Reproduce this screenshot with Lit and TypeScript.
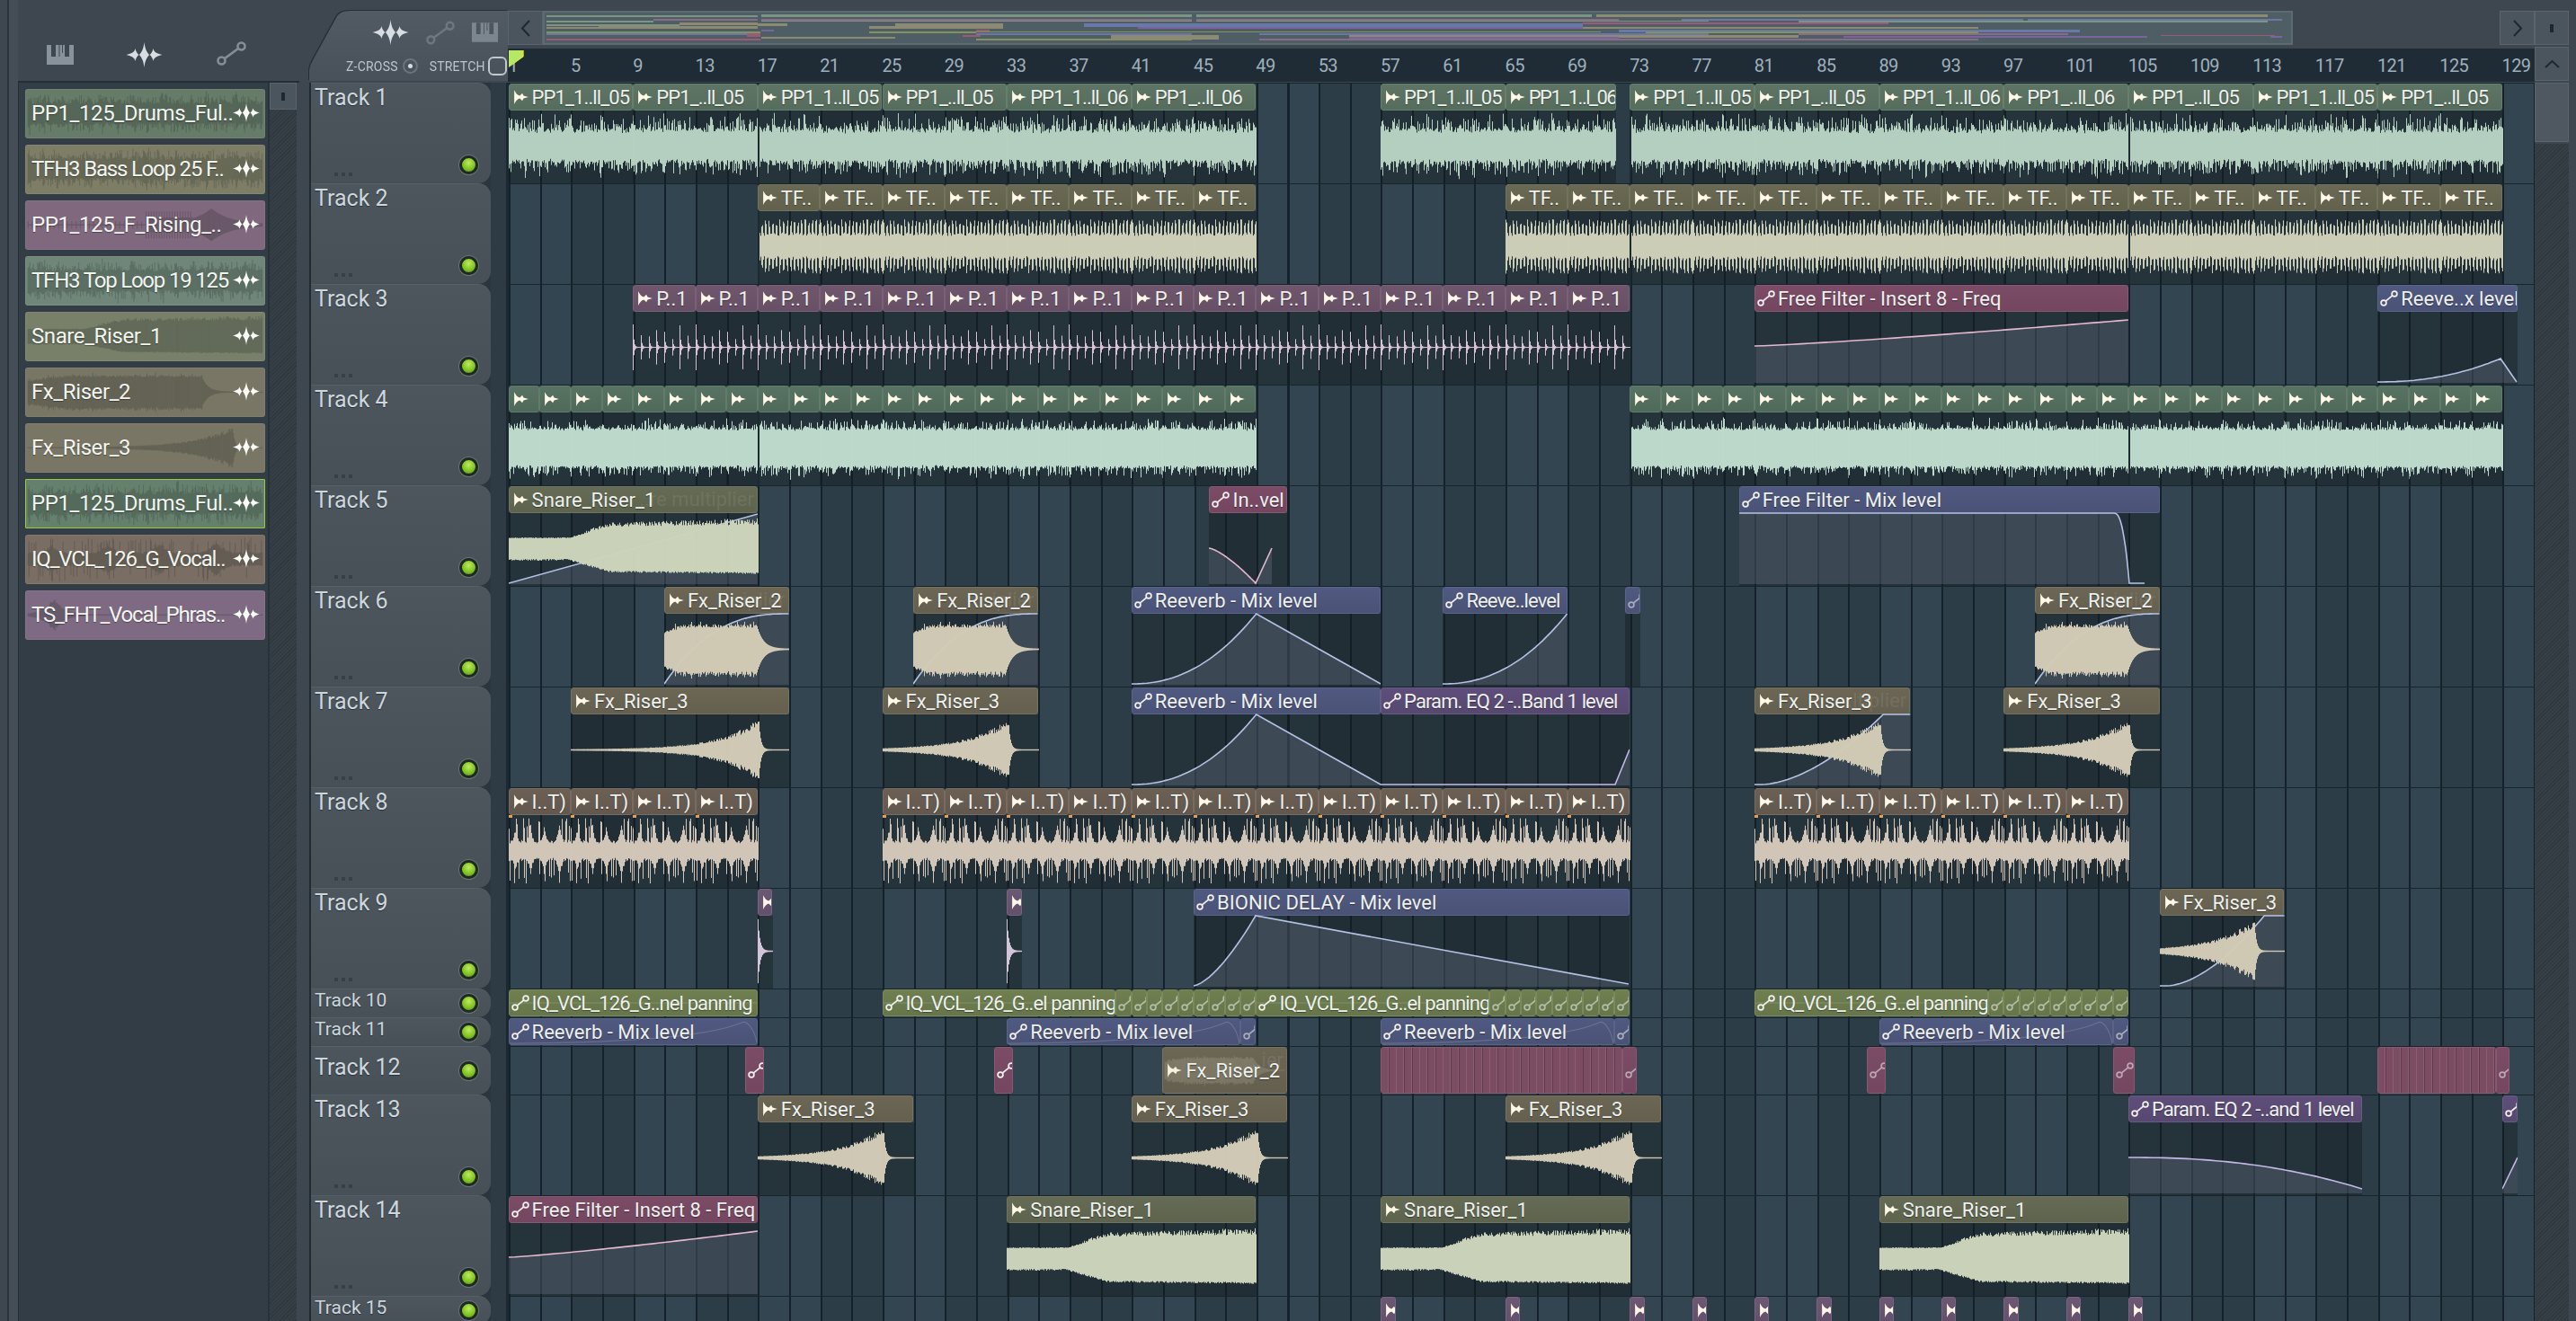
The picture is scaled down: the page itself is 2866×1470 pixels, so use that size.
import { LitElement, html, svg, css } from 'lit';
import { customElement } from 'lit/decorators.js';

const BAR = 17.33;

type Pt = [number, number];
interface Clip {
  b: number;
  n: number;
  t?: string;
  c: string;
  icon?: 'a' | 'l' | 'none';
  wave?: string;
  seed?: number;
  curve?: Pt[];
  ghost?: string;
  faint?: 'arc' | 'flat';
  dim?: boolean;
  strip?: boolean;
  tight?: boolean;
  tighter?: boolean;
  cut?: boolean;
}
interface Row {
  name: string;
  h: number;
  clips: Clip[];
}

function rng(seed: number) {
  let a = seed * 2654435761 >>> 0;
  return () => {
    a = (a + 0x6d2b79f5) >>> 0;
    let t = Math.imul(a ^ (a >>> 15), 1 | a);
    t = (t + Math.imul(t ^ (t >>> 7), 61 | t)) ^ t;
    return ((t ^ (t >>> 14)) >>> 0) / 4294967296;
  };
}

function amp(kind: string, x: number, w: number, r: () => number): [number, number] {
  const t = x / w;
  switch (kind) {
    case 'drums': {
      const base = 14 + r() * 3 + (x % 17 < 3 ? 5 : 0);
      return [base + (r() < 0.5 ? r() * 16 : r() * 4), base + (r() < 0.45 ? r() * 16 : r() * 4)];
    }
    case 'loud': {
      const base = 19 + r() * 2 + (x % 17 < 2 ? 3 : 0);
      return [base + (r() < 0.35 ? r() * 11 : r() * 3), base + (r() < 0.35 ? r() * 12 : r() * 3)];
    }
    case 'bass': {
      const p = x % 4;
      const a = p < 2 ? 22 + r() * 9 : 12 + r() * 4;
      return [a, a - r() * 2];
    }
    case 'pulse': {
      const big = Math.floor(x / 8.66) % 2 === 0;
      const a = (big ? 25 : 19) * Math.exp(-(x % 8.66) / 0.9) + 0.5;
      return [a, a];
    }
    case 'snare': {
      const a = t < 0.24 ? 11.5 : t < 0.4 ? 11.5 + ((t - 0.24) / 0.16) * 13 : 24.5 + (t - 0.4) * 3;
      return [a + (t > 0.3 ? r() * (2 + t * 6) : r()), a + r() * 2];
    }
    case 'riser2': {
      const end = w * 0.74;
      if (x < end) {
        const a = 17 + Math.min(1, t * 6) * 7 + r() * 4 + (r() < 0.12 ? r() * 6 : 0);
        return [a, a + r() * 3];
      }
      const a = 24 * Math.exp(-(x - end) / 7) + 0.7;
      return [a, a];
    }
    case 'riser3': {
      const peak = w - 34.7;
      if (x < peak) {
        const a = 32 * Math.exp(-(peak - x) / 43) * (0.8 + r() * 0.3) + 0.6;
        return [a, a];
      }
      const a = 32 * Math.exp(-(x - peak) / 2.2) + 0.7;
      return [a, a];
    }
    case 'vocal': {
      let a = 8 + r() * 4;
      for (const f of [0.1, 0.34, 0.56, 0.8]) {
        a = Math.max(a, (24 + f * 8) * Math.exp(-Math.abs(t - f) / 0.07) * (0.75 + r() * 0.25));
      }
      return [Math.max(a, r() < 0.16 ? 24 + r() * 12 : 0), Math.max(a, r() < 0.16 ? 24 + r() * 13 : 0)];
    }
    case 'tick': {
      const a = 35 * Math.exp(-x / 2.2) + 0.7;
      return [a, a];
    }
    case 'rising': {
      if (t < 0.5) return [x % 5 < 1 ? 6 : 1, x % 5 < 1 ? 6 : 1];
      if (t < 0.7) return [x % 3 < 1 ? 22 : 12, x % 3 < 1 ? 22 : 12];
      const a = 26 * Math.exp(-Math.abs(t - 0.78) / 0.08) + 1;
      return [a, a];
    }
    case 'phrase': {
      const a = 30 * Math.exp(-Math.abs(t - 0.11) / 0.04) * (0.7 + r() * 0.3) + 0.8;
      return [a, a];
    }
    default:
      return [1, 1];
  }
}

function wavePath(kind: string, w: number, cy: number, seed: number, scale = 1): string {
  const r = rng(seed);
  let d = '';
  for (let x = 0; x < w; x++) {
    const [u, v] = amp(kind, x, w, r);
    d += `M${x + 0.5} ${(cy - u * scale).toFixed(1)}V${(cy + v * scale).toFixed(1)}`;
  }
  return d;
}

function pts(w: number, f: (t: number) => number, n = 40, from = 0): Pt[] {
  const out: Pt[] = [];
  for (let i = 0; i <= n; i++) out.push([from + (w * i) / n, f(i / n)]);
  return out;
}

const rise = (t: number) => 110 - 78 * t ** 2.2;
const peakFall = (w: number): Pt[] => [...pts(w / 2, rise), [w, 110]];

function seq(b: number, count: number, n: number, t: string, c: string, extra: Partial<Clip> = {}): Clip[] {
  const out: Clip[] = [];
  for (let i = 0; i < count; i++) out.push({ b: b + i * n, n, t, c, seed: 7, ...extra });
  return out;
}

// the bars where the reference shows a dark seam between two samples
const SEAMS = [17, 73, 105];
const seam = (clips: Clip[]): Clip[] => clips.map(c => ({ ...c, cut: SEAMS.includes(c.b) }));

const riser2Curve = (w: number): Pt[] => pts(w, t => 110 - 78 * (1 - (1 - t) ** 2.6));
const riser3Curve = (w: number): Pt[] => [[0, 110], [8, 110], ...pts(w * 0.78, t => 110 - 78 * t ** 1.7, 30, 8), [w, 32]];

const A = (b: number, n: number, t: string, c: string, wave: string, extra: Partial<Clip> = {}): Clip => ({ b, n, t, c, wave, ...extra });
const L = (b: number, n: number, t: string, c: string, extra: Partial<Clip> = {}): Clip => ({ b, n, t, c, icon: 'l', ...extra });

const ROWS: Row[] = [
  { name: 'Track 1', h: 112, clips: seam([
    ['PP1_1..ll_05', 1, 8], ['PP1_..ll_05', 9, 8], ['PP1_1..ll_05', 17, 8], ['PP1_..ll_05', 25, 8],
    ['PP1_1..ll_06', 33, 8], ['PP1_..ll_06', 41, 8], ['PP1_1..ll_05', 57, 8], ['PP1_1..l_06', 65, 7.1],
    ['PP1_1..ll_05', 73, 8], ['PP1_..ll_05', 81, 8], ['PP1_1..ll_06', 89, 8], ['PP1_..ll_06', 97, 8],
    ['PP1_..ll_05', 105, 8], ['PP1_1..ll_05', 113, 8], ['PP1_..ll_05', 121, 8],
  ].map(([t, b, n], i) => A(b as number, n as number, t as string, 'green', 'drums', { seed: i + 11, tight: b !== 65, tighter: b === 65 }))) },
  { name: 'Track 2', h: 112, clips: seam([
    ...seq(17, 8, 4, 'TF..', 'khaki', { wave: 'bass' }),
    ...seq(65, 16, 4, 'TF..', 'khaki', { wave: 'bass' }),
  ]) },
  { name: 'Track 3', h: 112, clips: [
    ...seq(9, 16, 4, 'P..1', 'mauve', { wave: 'pulse' }),
    L(81, 24, 'Free Filter - Insert 8 - Freq', 'red', { curve: pts(24 * BAR, t => 70 - 29 * t ** 1.2) }),
    L(121, 9, 'Reeve..x level', 'blue', { curve: [...pts(137, t => 110 - 26 * t ** 2.2), [155, 110]] }),
  ] },
  { name: 'Track 4', h: 112, clips: seam([
    ...seq(1, 8, 2, '', 'mint', { wave: 'loud' }).map((c, i) => ({ ...c, seed: i + 60 })),
    ...seq(17, 16, 2, '', 'mint', { wave: 'loud' }).map((c, i) => ({ ...c, seed: i + 70 })),
    ...seq(73, 28, 2, '', 'mint', { wave: 'loud' }).map((c, i) => ({ ...c, seed: i + 90 })),
  ]) },
  { name: 'Track 5', h: 112, clips: [
    A(1, 16, 'Snare_Riser_1', 'olive', 'snare', { curve: [[0, 110], [277, 33]], ghost: '..re multiplier' }),
    L(46, 5, 'In..vel', 'red', { curve: [...pts(52, t => 71 + 39 * t ** 1.4), [70, 71]] }),
    L(80, 27, 'Free Filter - Mix level', 'blue', { curve: [[0, 32], [417, 32], ...pts(17, t => 32 + 78 * t ** 2.5, 12, 417), [451, 110]] }),
  ] },
  { name: 'Track 6', h: 112, clips: [
    A(11, 8, 'Fx_Riser_2', 'tan', 'riser2', { curve: riser2Curve(138.6), ghost: '..iplier' }),
    A(27, 8, 'Fx_Riser_2', 'tan', 'riser2', { curve: riser2Curve(138.6), ghost: '..iplier' }),
    A(99, 8, 'Fx_Riser_2', 'tan', 'riser2', { curve: riser2Curve(138.6), ghost: '..iplier' }),
    L(41, 16, 'Reeverb - Mix level', 'blue', { curve: peakFall(277.3) }),
    L(61, 8, 'Reeve..level', 'blue', { curve: pts(138.6, rise), tight: true }),
    L(72.7, 0.95, '', 'blue', { dim: true }),
  ] },
  { name: 'Track 7', h: 112, clips: [
    A(5, 14, 'Fx_Riser_3', 'tan', 'riser3'),
    A(25, 10, 'Fx_Riser_3', 'tan', 'riser3'),
    A(81, 10, 'Fx_Riser_3', 'tan', 'riser3', { curve: riser3Curve(173.3), ghost: '..ltiplier' }),
    A(97, 10, 'Fx_Riser_3', 'tan', 'riser3'),
    L(41, 16, 'Reeverb - Mix level', 'blue', { curve: peakFall(277.3) }),
    L(57, 16, 'Param. EQ 2 -..Band 1 level', 'purple', { curve: [[0, 110], [261, 110], [277, 71]], tight: true }),
  ] },
  { name: 'Track 8', h: 112, clips: [
    ...seq(1, 4, 4, 'I..T)', 'brown', { wave: 'vocal' }),
    ...seq(25, 12, 4, 'I..T)', 'brown', { wave: 'vocal' }),
    ...seq(81, 6, 4, 'I..T)', 'brown', { wave: 'vocal' }),
  ] },
  { name: 'Track 9', h: 112, clips: [
    A(17, 0.95, '', 'plum', 'tick'),
    A(33, 0.95, '', 'plum', 'tick'),
    L(45, 28, 'BIONIC DELAY - Mix level', 'blue', { curve: [...pts(69, t => 110 - 78 * t ** 1.5, 16), [484, 108]] }),
    A(107, 8, 'Fx_Riser_3', 'tan', 'riser3', { curve: riser3Curve(138.6) }),
  ] },
  { name: 'Track 10', h: 32, clips: [
    L(1, 16, 'IQ_VCL_126_G..nel panning', 'lime', { faint: 'flat', tight: true }),
    L(25, 15, 'IQ_VCL_126_G..el panning', 'lime', { faint: 'flat', tight: true }),
    ...seq(40, 9, 1, '', 'lime', { icon: 'l', dim: true }),
    L(49, 15, 'IQ_VCL_126_G..el panning', 'lime', { faint: 'flat', tight: true }),
    ...seq(64, 9, 1, '', 'lime', { icon: 'l', dim: true }),
    L(81, 15, 'IQ_VCL_126_G..el panning', 'lime', { faint: 'flat', tight: true }),
    ...seq(96, 9, 1, '', 'lime', { icon: 'l', dim: true }),
  ] },
  { name: 'Track 11', h: 32, clips: [
    L(1, 16, 'Reeverb - Mix level', 'blue', { faint: 'arc' }),
    L(33, 15, 'Reeverb - Mix level', 'blue', { faint: 'arc' }), L(48, 1, '', 'blue', { dim: true }),
    L(57, 15, 'Reeverb - Mix level', 'blue', { faint: 'arc' }), L(72, 1, '', 'blue', { dim: true }),
    L(89, 15, 'Reeverb - Mix level', 'blue', { faint: 'arc' }), L(104, 1, '', 'blue', { dim: true }),
  ] },
  { name: 'Track 12', h: 54, clips: [
    L(16.2, 1.2, '', 'red'),
    L(32.2, 1.2, '', 'red'),
    A(43, 8, 'Fx_Riser_2', 'tan', 'none', { ghost: '..ier' }),
    { b: 57, n: 15.5, c: 'red', icon: 'none', strip: true },
    L(72.5, 0.95, '', 'red', { dim: true }),
    L(88.2, 1.2, '', 'red', { dim: true }),
    L(104, 1.4, '', 'red', { dim: true }),
    { b: 121, n: 7.6, c: 'red', icon: 'none', strip: true },
    L(128.6, 0.9, '', 'red', { dim: true }),
  ] },
  { name: 'Track 13', h: 112, clips: [
    A(17, 10, 'Fx_Riser_3', 'tan', 'riser3'),
    A(41, 10, 'Fx_Riser_3', 'tan', 'riser3'),
    A(65, 10, 'Fx_Riser_3', 'tan', 'riser3'),
    L(105, 15, 'Param. EQ 2 -..and 1 level', 'purple', { curve: pts(260, t => 71 + 35 * t ** 2.3), tight: true }),
    L(129, 1, '', 'purple', { curve: [[0, 106], [17, 71]] }),
  ] },
  { name: 'Track 14', h: 112, clips: [
    L(1, 16, 'Free Filter - Insert 8 - Freq', 'red', { curve: pts(277, t => 70 - 29 * t ** 1.2) }),
    A(33, 16, 'Snare_Riser_1', 'olive', 'snare'),
    A(57, 16, 'Snare_Riser_1', 'olive', 'snare'),
    A(89, 16, 'Snare_Riser_1', 'olive', 'snare'),
  ] },
  { name: 'Track 15', h: 32, clips: [57, 65, 73, 77, 81, 85, 89, 93, 97, 101, 105].map(b => ({ b, n: 0.95, c: 'plum', t: '' })) },
];

const PICKER = [
  ['PP1_125_Drums_Ful..', 'p-green', 'drums'],
  ['TFH3 Bass Loop 25 F..', 'p-khaki sq', 'drums'],
  ['PP1_125_F_Rising_..', 'p-mauve', 'rising'],
  ['TFH3 Top Loop 19 125', 'p-teal sq', 'drums'],
  ['Snare_Riser_1', 'p-olive', 'snare'],
  ['Fx_Riser_2', 'p-tan', 'riser2'],
  ['Fx_Riser_3', 'p-tan', 'riser3'],
  ['PP1_125_Drums_Ful..', 'p-sel', 'drums'],
  ['IQ_VCL_126_G_Vocal..', 'p-taupe sq', 'vocal'],
  ['TS_FHT_Vocal_Phras..', 'p-plum sq', 'phrase'],
];

const RULER = Array.from({ length: 33 }, (_, i) => i * 4 + 1);

// mini map of the song: x1, x2, y, height, colour
const G = '#7c9482', P = '#8a6c88', T = '#8c8a72', O = '#84925e', B = '#6a78a8', V = '#7a64a0', R = '#9a5a78';
const MINI: [number, number, number, number, string][] = [
  [607, 726, 3, 2, G], [726, 842, 3, 2, G], [846, 1325, 2, 3, G], [1330, 1770, 2, 3, G], [1775, 2200, 2, 3, T], [2200, 2522, 2, 3, T],
  [726, 842, 7, 2, P], [846, 1325, 7, 2, P], [1330, 1800, 7, 2, P], [1870, 2250, 7, 2, B], [2255, 2538, 7, 2, B],
  [607, 726, 9, 2, G], [846, 1325, 9, 1, G], [1330, 1900, 9, 1, G], [2000, 2522, 9, 2, G],
  [607, 755, 13, 2, G], [755, 842, 11, 3, T], [842, 875, 12, 3, T], [995, 1115, 12, 3, T], [1205, 1760, 12, 4, B], [1760, 2100, 11, 2, R],
  [607, 665, 16, 2, T], [665, 842, 15, 3, T], [966, 1115, 15, 3, T], [1265, 1760, 16, 2, V], [1760, 2200, 16, 2, T],
  [846, 860, 19, 2, V], [1085, 1100, 19, 2, R], [1800, 2313, 19, 3, B],
  [607, 845, 21, 2, O], [966, 1085, 21, 2, O], [1085, 1780, 21, 1, O], [1830, 2200, 21, 2, O],
  [607, 830, 23, 2, B], [830, 845, 23, 2, R], [1085, 1325, 23, 2, B], [1400, 1900, 23, 2, B], [2000, 2300, 23, 2, P],
  [830, 845, 25, 2, R], [1070, 1090, 25, 2, R], [1235, 1355, 25, 4, T], [1500, 2000, 25, 3, T], [2050, 2388, 26, 2, V],
  [846, 995, 27, 2, T], [1500, 1800, 27, 2, V], [2403, 2530, 25, 1, R], [2525, 2538, 26, 2, V],
  [607, 845, 29, 2, R], [1085, 1325, 29, 2, O], [1235, 1355, 28, 2, T], [1400, 2200, 29, 2, P],
  [607, 875, 35, 2, B], [1000, 1700, 35, 2, P], [1800, 2100, 35, 2, R],
];

const audioIcon = html`<svg class="ic-a" viewBox="0 0 16 16"><path d="M1 1C2.5 4 4 6 6.5 6.6L9 4.2 10.2 6.6 15 8 10.2 9.4 9 11.8 6.5 9.4C4 10 2.5 12 1 15Z"></path></svg>`;
const linkIcon = html`<svg class="ic-l" viewBox="0 0 20 18"><circle cx="4" cy="14" r="2.9"></circle><circle cx="16" cy="4" r="2.9"></circle><path d="M6.2 12.1 13.8 5.9"></path></svg>`;

const bigWave = (cls: string) => html`<svg class=${cls} viewBox="0 0 40 28"><path d="M20 0C21 8 23 11 25.5 14 23 17 21 20 20 28 19 20 17 17 14.5 14 17 11 19 8 20 0ZM10 7C10.6 10 12 12.6 14 14 12 15.4 10.6 18 10 21 9.4 18 8 16 0 14 8 12 9.4 10 10 7ZM30 7C30.6 10 32 12 40 14 32 16 30.6 18 30 21 29.4 18 28 15.4 26 14 28 12.6 29.4 10 30 7Z"></path></svg>`;
const piano = (cls: string) => html`<svg class=${cls} viewBox="0 0 30 22"><path d="M0 0H30V22H0Z"></path><path class="keys" d="M5 0H10V13H5ZM13.5 0H14.5V13H13.5ZM20 0H25V13H20ZM17 0H18V9H17Z"></path></svg>`;
const bigLink = (cls: string) => html`<svg class=${cls} viewBox="0 0 33 27"><circle cx="5.5" cy="21.5" r="4"></circle><circle cx="27.5" cy="5.5" r="4"></circle><path d="M9 19 24 8"></path></svg>`;

@customElement('app-root')
export class AppRoot extends LitElement {
  static styles = css`
    :host {
      display: block;
      width: 2866px;
      height: 1470px;
      overflow: hidden;
      background: #3e4750;
      font-family: Roboto, "Liberation Sans", sans-serif;
      color: #e6ecec;
    }
    .app { display: flex; height: 1470px; }

    /* left rail with the clip picker */
    .rail {
      width: 344px;
      flex: none;
      display: flex;
      flex-direction: column;
      padding-left: 20px;
      box-sizing: border-box;
      background: linear-gradient(90deg, #3e4750 0 8px, #2a343c 8px 10px, #454e56 10px 20px, #3e4750 20px);
    }
    .rail-tools {
      height: 90px;
      flex: none;
      box-sizing: border-box;
      padding: 50px 0 0 32px;
      display: flex;
      align-items: flex-start;
      gap: 58px;
    }
    .rt-piano { width: 30px; height: 22px; fill: #88929a; }
    .rt-piano .keys, .tp-piano .keys { fill: #3e4750; }
    .rt-wave { width: 41px; height: 28px; fill: #d7dde2; margin-top: -3px; }
    .rt-link { width: 33px; height: 27px; margin-left: 2px; margin-top: -4px; fill: none; stroke: #848e96; stroke-width: 2.6; }
    .picker-wrap {
      flex: 1;
      display: flex;
      width: 312px;
      border-top: 2px solid #232e36;
      border-left: 1px solid #232e36;
    }
    .picker {
      width: 279px;
      flex: none;
      box-sizing: border-box;
      padding: 7px 3px 0 7px;
      display: flex;
      flex-direction: column;
      gap: 7.5px;
      background: #333d46;
      border-right: 2px solid #27323a;
    }
    .pick {
      position: relative;
      height: 54.5px;
      flex: none;
      box-sizing: border-box;
      border-radius: 3px;
      border: 1px solid rgba(255, 255, 255, .07);
      display: flex;
      align-items: center;
      padding-left: 6px;
      overflow: hidden;
    }
    .pick svg.pw { position: absolute; left: 0; top: 0; width: 100%; height: 100%; }
    .pw path { stroke: rgba(30, 40, 36, .24); stroke-width: 1; fill: none; }
    .pick span {
      position: relative;
      font-size: 24px;
      letter-spacing: -.4px;
      white-space: nowrap;
      color: #f2f5f0;
      text-shadow: 0 1px 1px rgba(0, 0, 0, .35);
    }
    .pick.sq span { letter-spacing: -1.2px; }
    .pick .pi { position: absolute; right: 5px; top: 13px; width: 30px; height: 25px; fill: #fbfdf8; }
    .p-green { background: #677b69; }
    .p-khaki { background: #7e7e67; }
    .p-mauve { background: #80687e; }
    .p-teal { background: #6f8678; }
    .p-olive { background: #78806a; }
    .p-tan { background: #7a7665; }
    .p-sel { background: #66806e; border: 1.5px solid #9ccc3c; border-radius: 1px; }
    .p-taupe { background: #7a6e64; }
    .p-plum { background: #7e6a82; }
    .vbar { width: 30px; flex: none; display: flex; flex-direction: column; }
    .hatch {
      flex: 1;
      background: repeating-linear-gradient(135deg, #2f383f 0 1px, #363f46 1px 3px);
    }
    .sbtn {
      flex: none;
      box-sizing: border-box;
      background: #4b555d;
      border: 1.5px solid #5a646c;
      display: flex;
      align-items: center;
      justify-content: center;
    }
    .sbtn i { display: block; width: 4px; height: 9px; background: #20282e; }
    .vbar .sbtn { height: 30px; }

    /* playlist */
    .playlist {
      width: 2476px;
      flex: none;
      display: flex;
      flex-direction: column;
    }
    .top { height: 92px; flex: none; display: flex; }
    .tools-wrap { width: 221px; flex: none; padding-top: 12px; filter: drop-shadow(-1px -1px 0 #232e36); }
    .tools {
      height: 78px;
      box-sizing: border-box;
      background: linear-gradient(#525b63, #48515a);
      clip-path: path('M0 78L0 66Q1 60 4 55L31 6Q35 0 45 0L221 0 221 78Z');
      display: flex;
      flex-direction: column;
      padding: 5px 0 0 0;
    }
    .tool-icons { height: 38px; display: flex; align-items: center; gap: 19px; padding-left: 70px; }
    .tp-wave { width: 41px; height: 28px; fill: #d7dde2; }
    .tp-link { width: 32px; height: 27px; fill: none; stroke: #6d7780; stroke-width: 2.6; }
    .tp-piano { width: 29px; height: 22px; fill: #7c868e; }
    .tp-piano .keys { fill: #4d565e; }
    .tool-opts {
      display: flex;
      align-items: center;
      gap: 10px;
      padding: 8px 0 0 41px;
      font-size: 14px;
      letter-spacing: .2px;
      color: #bcc5cc;
      white-space: nowrap;
    }
    .radio {
      width: 17px;
      height: 17px;
      flex: none;
      box-sizing: border-box;
      border-radius: 50%;
      border: 2.5px solid #6a747c;
      display: flex;
      align-items: center;
      justify-content: center;
      margin: 0 3px 0 -5px;
    }
    .radio i { width: 5px; height: 5px; border-radius: 50%; background: #d7dde2; }
    .check {
      width: 21px;
      height: 21px;
      flex: none;
      box-sizing: border-box;
      border-radius: 6px;
      border: 2px solid #c0c8ce;
      margin-left: -7px;
    }
    .top-right { flex: 1; display: flex; flex-direction: column; padding-top: 12px; min-width: 0; }
    .over-row { display: flex; height: 38px; flex: none; }
    .over-row .sbtn { width: 39px; }
    .chev { width: 12px; height: 19px; fill: none; stroke: #20282e; stroke-width: 2; }
    .overview {
      width: 1947px;
      flex: none;
      box-sizing: border-box;
      background: #4f5d65;
      border: 2px solid #5c6a72;
    }
    .overview svg { display: block; width: 100%; height: 100%; }
    .over-gap { flex: 1; }
    .ruler {
      position: relative;
      margin-top: 4px;
      height: 37px;
      flex: none;
      background: #1f2c35;
      display: flex;
      overflow: hidden;
      box-sizing: border-box;
      padding: 7px 0 0 0.6px;
    }
    .ruler span {
      width: 69.32px;
      flex: none;
      font-size: 20px;
      letter-spacing: -.6px;
      color: #9fb0bd;
    }
    .playhead { position: absolute; left: 1px; top: 2px; width: 17px; height: 19px; }

    .rows { flex: 1; display: flex; flex-direction: column; min-height: 0; }
    .row { display: flex; flex: none; }
    .label {
      width: 200px;
      flex: none;
      box-sizing: border-box;
      margin-left: 2px;
      position: relative;
      padding: 1px 0 0 4px;
      background: linear-gradient(#4d555d, #474f57);
      border-radius: 0 14px 14px 0;
      border-top: 1px solid #565e66;
      font-size: 25px;
      color: #ccd7de;
      text-shadow: 0 1px 1px rgba(0, 0, 0, .4);
      white-space: nowrap;
    }
    .labelwrap { display: flex; flex: none; width: 221.6px; background: linear-gradient(90deg, #202b33 0 2px, #2a353d 2px 202px, #2e3b44 202px 219px, #1d2931 219px); }
    .label.small { font-size: 21px; padding-top: 0; }
    .label.mid { padding-top: 8px; }
    .led {
      position: absolute;
      right: 14px;
      bottom: 10px;
      width: 21px;
      height: 21px;
      box-sizing: border-box;
      border-radius: 50%;
      border: 3px solid #1f2a20;
      box-shadow: 0 0 0 1px #69727a;
      background: radial-gradient(circle at 50% 35%, #bcec5c, #7cc022 60%, #4d8a10);
    }
    .label.small .led { bottom: 5px; }
    .label.mid .led { bottom: 16px; }
    .dots { position: absolute; left: 26px; bottom: 8px; display: flex; gap: 4px; }
    .dots i { width: 4px; height: 4px; background: #383f47; }

    .lane {
      position: relative;
      flex: 1;
      min-width: 0;
      overflow: hidden;
      box-shadow: inset 0 1px 0 #18242c;
      background:
        repeating-linear-gradient(90deg, #15222b 0 2px, transparent 2px 34.66px),
        repeating-linear-gradient(90deg, #334550 0 69.32px, #2d3d47 69.32px 138.64px);
    }
    .clip {
      position: absolute;
      top: 1px;
      bottom: 0;
      display: flex;
      flex-direction: column;
      overflow: hidden;
    }
    .head {
      position: relative;
      height: 30px;
      flex: none;
      box-sizing: border-box;
      display: flex;
      align-items: center;
      padding-left: 4px;
      overflow: hidden;
      border-radius: 3px;
      border: 1px solid var(--edge);
      background: linear-gradient(var(--bg2), var(--bg));
      font-size: 22px;
      color: #eef1ee;
      text-shadow: 0 1px 1px rgba(0, 0, 0, .4);
      white-space: nowrap;
    }
    .clip.full .head { height: 100%; }
    .clip.full { bottom: 1px; }
    .tight .head { letter-spacing: -.9px; }
    .tighter .head { letter-spacing: -1.5px; }
    .head > b { font-weight: 400; position: relative; margin-left: 3px; }
    .ghost { position: absolute; right: 3px; top: 1px; opacity: .08; color: #fff; text-shadow: none; }
    .ic-a { width: 18px; height: 18px; flex: none; fill: #fff8e8; }
    .ic-l { width: 20px; height: 18px; flex: none; fill: none; stroke: #f4f2f0; stroke-width: 1.7; margin-left: -2px; }
    .dim .ic-l, .dim .ic-a { opacity: .55; }
    .faint { position: absolute; left: 0; top: 0; width: 100%; height: 100%; fill: none; stroke: rgba(255, 255, 255, .16); stroke-width: 1.2; }
    .body {
      position: relative;
      flex: 1;
      min-height: 0;
      background: rgba(18, 26, 32, .42);
    }
    .cut .body::after { content: ""; position: absolute; left: 0; top: 0; bottom: 0; width: 2px; background: #1d2a32; }
    .body svg { position: absolute; left: 0; top: 0; overflow: visible; }
    .wv { fill: none; stroke: var(--wave); stroke-width: 1; }
    .fill { fill: rgba(120, 130, 150, .3); stroke: none; }
    .crv { fill: none; stroke: var(--line); stroke-width: 1.6; }
    .tick { position: absolute; left: 0; top: 0; width: 4px; height: 3px; background: #e8a050; }
    .strip .head {
      padding: 0;
      background: repeating-linear-gradient(90deg, #7c4c62 0 7px, #8a5e76 7px 8px, #5f3a4c 8px 8.66px);
    }

    .green { --bg: #566c5c; --bg2: #5e7565; --edge: #677f6d; --wave: #b9d3c2; --line: #cfe; }
    .mint { --bg: #506a5a; --bg2: #587263; --edge: #627c6c; --wave: #c0dccd; --line: #cfe; }
    .khaki { --bg: #62624c; --bg2: #6a6a54; --edge: #74745c; --wave: #d0d1ba; --line: #eed; }
    .mauve { --bg: #675065; --bg2: #6f566d; --edge: #7a6078; --wave: #dcc6d8; --line: #eed; }
    .red { --bg: #744660; --bg2: #7c4c66; --edge: #885870; --wave: #dcc; --line: #e6b8d0; }
    .blue { --bg: #4a5276; --bg2: #505980; --edge: #5a638a; --wave: #ccd; --line: #b5c2e4; }
    .purple { --bg: #574870; --bg2: #5e4e7a; --edge: #6a5a86; --wave: #ccd; --line: #c4b8e8; }
    .olive { --bg: #5d634d; --bg2: #656b54; --edge: #70765e; --wave: #cdd5bd; --line: #b5c2e4; }
    .tan { --bg: #645f4e; --bg2: #6c6755; --edge: #78725f; --wave: #d2ccb8; --line: #b5c2e4; }
    .brown { --bg: #63584e; --bg2: #6c6055; --edge: #786c60; --wave: #d5c9bc; --line: #ddd; }
    .lime { --bg: #67764a; --bg2: #6f7f50; --edge: #7a8a5a; --wave: #ddd; --line: #ddd; }
    .plum { --bg: #65506c; --bg2: #6d5874; --edge: #786480; --wave: #d8c8de; --line: #ddd; }

    .right {
      width: 38px;
      flex: none;
      display: flex;
      flex-direction: column;
      padding-top: 12px;
      gap: 2px;
    }
    .right .sbtn { height: 38px; }
    .right .thumb { height: 66px; flex: none; box-sizing: border-box; background: #4f5860; border: 1.5px solid #5a646c; }
  `;

  renderClip(c: Clip, h: number) {
    const w = c.n * BAR;
    const tall = h > 100;
    const bodyH = h - 32;
    const icon = c.icon ?? 'a';
    const cls = `clip ${c.c} ${tall ? '' : 'full'} ${c.dim ? 'dim' : ''} ${c.strip ? 'strip' : ''} ${c.tight ? 'tight' : ''} ${c.tighter ? 'tighter' : ''} ${c.cut ? 'cut' : ''}`;
    const curve = c.curve ? c.curve.map(([x, y]) => `${x.toFixed(1)} ${(y - 32).toFixed(1)}`) : null;
    const last = c.curve ? c.curve[c.curve.length - 1][0] : 0;
    const first = c.curve ? c.curve[0][0] : 0;
    let extra = html``;
    if (c.faint === 'arc') {
      extra = html`<svg class="faint" preserveAspectRatio="none" viewBox="0 0 100 30"><path d="M0 29C40 29 80 22 94 4 96 2 99 12 100 29" vector-effect="non-scaling-stroke"></path></svg>`;
    } else if (c.faint === 'flat') {
      extra = html`<svg class="faint" preserveAspectRatio="none" viewBox="0 0 100 30"><path d="M0 15H100" vector-effect="non-scaling-stroke"></path></svg>`;
    } else if (!tall && c.t === 'Fx_Riser_2') {
      extra = html`<svg class="faint" style="stroke:none" viewBox="0 0 ${w} 52"><path d=${wavePath('riser2', w, 26, 5, 0.55)} style="stroke:rgba(220,215,195,.2);stroke-width:1"></path></svg>`;
    }
    // a wave clip is a hair wider, so that rounding leaves no gap before the next sample
    const cw = c.wave && c.wave !== 'none' ? w + 0.7 : w;
    return html`
      <div class=${cls} style="left:${(c.b - 1) * BAR}px;width:${cw}px">
        <div class="head" style="width:${w}px">
          ${extra}
          ${icon === 'l' ? linkIcon : icon === 'a' ? audioIcon : ''}
          ${c.t ? html`<b>${c.t}</b>` : ''}
          ${c.ghost ? html`<span class="ghost">${c.ghost}</span>` : ''}
        </div>
        ${tall ? html`
          <div class="body">
            <svg width=${w} height=${bodyH} viewBox="0 0 ${w} ${bodyH}">
              ${curve ? svg`<path class="fill" d="M${first} ${bodyH - 1}L${curve.join('L')}L${last} ${bodyH - 1}Z"></path>` : ''}
              ${curve ? svg`<path class="crv" d="M${curve.join('L')}"></path>` : ''}
              ${c.wave && c.wave !== 'none' ? svg`<path class="wv" d=${wavePath(c.wave, w + 1, 39.5, c.seed ?? 3)}></path>` : ''}
            </svg>
            ${c.wave === 'vocal' ? html`<i class="tick"></i>` : ''}
          </div>` : ''}
      </div>`;
  }

  renderRow(r: Row) {
    const small = r.h < 40;
    const mid = r.h === 54;
    return html`
      <div class="row" style="height:${r.h}px">
        <div class="labelwrap">
          <div class="label ${small ? 'small' : mid ? 'mid' : ''}">
            ${r.name}
            ${r.h > 100 ? html`<div class="dots"><i></i><i></i><i></i></div>` : ''}
            <div class="led"></div>
          </div>
        </div>
        <div class="lane">${r.clips.map(c => this.renderClip(c, r.h))}</div>
      </div>`;
  }

  render() {
    return html`
      <div class="app">
        <div class="rail">
          <div class="rail-tools">
            ${piano('rt-piano')}
            ${bigWave('rt-wave')}
            ${bigLink('rt-link')}
          </div>
          <div class="picker-wrap">
            <div class="picker">
              ${PICKER.map(([name, cls, kind], i) => html`
                <div class="pick ${cls}">
                  <svg class="pw" viewBox="0 0 269 54"><path d=${wavePath(kind, 269, 27, i + 40, 0.7)}></path></svg>
                  <span>${name}</span>
                  ${bigWave('pi')}
                </div>`)}
            </div>
            <div class="vbar">
              <div class="sbtn"><i></i></div>
              <div class="hatch"></div>
            </div>
          </div>
        </div>

        <div class="playlist">
          <div class="top">
            <div class="tools-wrap">
              <div class="tools">
                <div class="tool-icons">
                  ${bigWave('tp-wave')}
                  ${bigLink('tp-link')}
                  ${piano('tp-piano')}
                </div>
                <div class="tool-opts">
                  <span>Z-CROSS</span>
                  <div class="radio"><i></i></div>
                  <span>STRETCH</span>
                  <div class="check"></div>
                </div>
              </div>
            </div>
            <div class="top-right">
              <div class="over-row">
                <div class="sbtn"><svg class="chev" viewBox="0 0 12 19"><path d="M10 1 2 9.5 10 18"></path></svg></div>
                <div class="overview">
                  <svg viewBox="605 0 1943 34" preserveAspectRatio="none">
                    ${MINI.map(([a, b, y, h, col]) => svg`<rect x=${a} y=${y} width=${b - a} height=${h} fill=${col}></rect>`)}
                  </svg>
                </div>
                <div class="over-gap"></div>
                <div class="sbtn"><svg class="chev" viewBox="0 0 12 19"><path d="M2 1 10 9.5 2 18"></path></svg></div>
              </div>
              <div class="ruler">
                ${RULER.map(n => html`<span>${n}</span>`)}
                <svg class="playhead" viewBox="0 0 17 19">
                  <path d="M0 0H16.5V7L0 19Z" fill="#b6e866"></path>
                  <path d="M14 0H16.5V7L0 19 14 7Z" fill="#d8e040"></path>
                </svg>
              </div>
            </div>
          </div>
          <div class="rows">${ROWS.map(r => this.renderRow(r))}</div>
        </div>

        <div class="right">
          <div class="sbtn"><i></i></div>
          <div class="sbtn"><svg class="chev" style="width:19px;height:12px" viewBox="0 0 19 12"><path d="M2 10 9.5 3 17 10"></path></svg></div>
          <div class="thumb"></div>
          <div class="hatch"></div>
        </div>
      </div>`;
  }
}
